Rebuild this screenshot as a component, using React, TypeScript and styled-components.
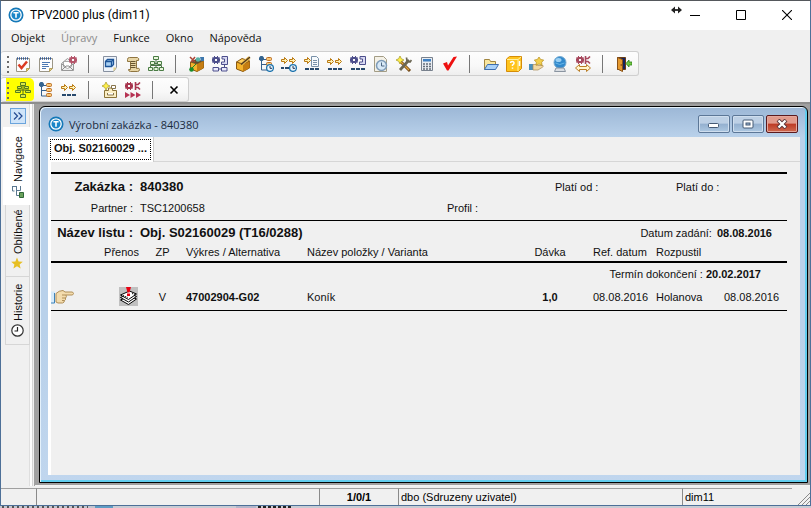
import React from "react";
import styled, { createGlobalStyle, css } from "styled-components";

const Global = createGlobalStyle`
  *, *::before, *::after { box-sizing: border-box; }
  html, body { margin: 0; padding: 0; }
  body { font-family: "Liberation Sans", Arial, sans-serif; font-size: 11px; color: #111; overflow: hidden; }
  button { font: inherit; color: inherit; margin: 0; padding: 0; border: 0; background: none; }
  h1, h2, p, dl, dd, dt { margin: 0; font-weight: inherit; font-size: inherit; }
`;

const ui = css`font-family: "Open Sans", "Segoe UI", sans-serif;`;

/* ---------- shell ---------- */
const Shell = styled.div`
  min-height: 100vh;
  display: flex;
  flex-direction: column;
  background: #c9ccd4;
`;
const AppWindow = styled.div`
  flex: 1;
  display: flex;
  flex-direction: column;
  background: #f0f0f0;
  border: 1px solid #4d7098;
  border-top-color: #55585c;
`;
const TitleBar = styled.header`
  position: relative;
  display: flex;
  align-items: center;
  height: 29px;
  padding: 0 0 2px 7px;
  gap: 6px;
  background: #fff;
`;
const Title = styled.h1`
  font-family: Roboto, "Segoe UI", sans-serif;
  font-size: 12px;
  flex: 1;
  color: #000;
`;
const Caption = styled.div`display: flex; align-items: center;`;
const CaptionButton = styled.button`
  width: 46px;
  height: 27px;
  display: grid;
  place-items: center;
`;
const ResizeMark = styled.span`
  position: absolute;
  top: 5px;
  right: 128px;
  display: grid;
`;

const MenuBar = styled.nav`
  display: flex;
  align-items: flex-start;
  height: 21px;
  padding-left: 2px;
`;
const MenuItem = styled.button<{ $muted?: boolean }>`
  ${ui}
  font-size: 11px;
  line-height: 16px;
  padding: 0 8px;
  color: ${(p) => (p.$muted ? "#8c8c8c" : "#111")};
`;

const Toolbars = styled.div`
  display: flex;
  flex-direction: column;
  align-items: flex-start;
  gap: 1px;
  border-bottom: 2px solid #8e8e8e;
`;
const Toolbar = styled.div`
  display: flex;
  align-items: center;
  height: 25px;
  padding: 0 3px 0 5px;
  border: 1px solid #cfcfcf;
  border-left: 0;
  border-radius: 3px;
  background: linear-gradient(#fdfdfd, #f8f8f8 60%, #eeeeee);
`;
const Grip = styled.span<{ $marked?: boolean }>`
  width: 5px;
  height: 23px;
  padding: 4px 2px 2px 1px;
  background: repeating-linear-gradient(#6b6b6b 0 2px, transparent 2px 5px) content-box,
    ${(p) => (p.$marked ? "#ffff00" : "transparent")};
`;
const Tool = styled.button<{ $marked?: boolean }>`
  width: 23px;
  height: 23px;
  display: grid;
  place-items: center;
  background: ${(p) => (p.$marked ? "#ffff00" : "transparent")};
  border-radius: 0 5px 4px 0;
`;
const Divider = styled.span`
  width: 1px;
  height: 18px;
  margin: 0 9px 0 8px;
  background: #777;
`;

/* ---------- workspace ---------- */
const Workspace = styled.main`flex: 1; display: flex;`;
const Sidebar = styled.aside`
  width: 34px;
  padding: 4px 1px 4px 2px;
  display: flex;
  flex-direction: column;
  background: linear-gradient(to left, #a0a0a0 1px, #f0f0f0 1px 2px, #d4d4d4 2px 3px, #fdfdfd 3px 5px, #dedede 5px 6px, #f0f0f0 6px);
`;
const Expand = styled.button`
  width: 16px;
  height: 16px;
  margin: 0 0 3px 7px;
  border: 1px solid #6aa4dc;
  background: #cfe4f9;
  display: grid;
  place-items: center;
`;
const SideTab = styled.button<{ $active?: boolean; $height: number }>`
  width: ${(p) => (p.$active ? 29 : 25)}px;
  height: ${(p) => p.$height}px;
  margin-left: ${(p) => (p.$active ? 0 : 2)}px;
  padding: 7px 0;
  writing-mode: vertical-rl;
  transform: rotate(180deg);
  display: flex;
  align-items: center;
  gap: 3px;
  font-size: 11px;
  white-space: nowrap;
  background: ${(p) => (p.$active ? "#fff" : "#f0f0f0")};
  border: ${(p) => (p.$active ? "0" : "1px solid #d6d6d6")};
  border-bottom-width: 0;
`;
const Turned = styled.span`display: grid; transform: rotate(180deg);`;

const Desk = styled.section`
  flex: 1;
  display: flex;
  min-width: 0;
  padding: 2px 2px 2px 4px;
  background: #a0a0a0;
  border-bottom: 1px solid #f4f4f4;
`;
const Child = styled.article`
  flex: 1;
  min-width: 0;
  display: flex;
  flex-direction: column;
  padding: 0 7px 7px 8px;
  border: 1px solid #000;
  border-radius: 6px 6px 0 0;
  background: linear-gradient(#9cb7d6, #b9d1ea 30px, #b9d1ea 60%, #c0d6ee);
  box-shadow: inset 1px 1px 0 #e4f1fb, inset -2px -2px 0 #62cdee;
`;
const ChildBar = styled.header`
  display: flex;
  align-items: center;
  gap: 5px;
  height: 30px;
  padding: 4px 0 0 0;
  color: #1b2b40;
`;
const ChildTitle = styled.h2`${ui} font-size: 11px; flex: 1;`;
const ChildControls = styled.div`display: flex; gap: 2px; padding-right: 2px;`;
const ChildButton = styled.button<{ $danger?: boolean }>`
  width: 32px;
  height: 18px;
  display: grid;
  place-items: center;
  border: 1px solid ${(p) => (p.$danger ? "#5b1a1e" : "#5c7797")};
  border-radius: 2px;
  box-shadow: inset 0 0 0 1px ${(p) => (p.$danger ? "#e5a79c" : "#cfdeee")};
  background: ${(p) =>
    p.$danger
      ? "linear-gradient(#e19a8c 0 45%, #bd3a25 50%, #cf6a50)"
      : "linear-gradient(#bdd0e5 0 45%, #94b0cf 50%, #adc8e2)"};
`;
const Document = styled.div`
  flex: 1;
  display: flex;
  flex-direction: column;
  min-width: 0;
  background: #f0f0f0;
`;
const DocTabs = styled.div`
  height: 25px;
  display: flex;
  border-bottom: 1px solid #d6d6d6;
`;
const DocTab = styled.button`
  height: 25px;
  padding: 2px;
  background: #fff;
  border-right: 1px solid #ccc;
  display: flex;
  & > span {
    height: 21px;
    padding: 0 3px;
    line-height: 17px;
    border: 1px dotted #000;
    font-weight: 700;
  }
`;

/* ---------- report ---------- */
const Report = styled.div`
  flex: 1;
  padding: 10px 13px 0 0;
  border-left: 3px solid #fff;
  font-size: 11px;
`;
const Band = styled.dl`
  display: grid;
  grid-template-columns: 396px 1fr 121px 111px;
  grid-template-rows: 25px 17px;
  padding-bottom: 4px;
  align-items: center;
  border-top: 2px solid #000;
  border-bottom: 1px solid #000;
`;
const Field = styled.div<{ $column?: string; $gap?: number }>`
  grid-column: ${(p) => p.$column ?? "auto"};
  display: flex;
  align-items: baseline;
  gap: ${(p) => p.$gap ?? 7}px;
  white-space: nowrap;
`;
const Label = styled.dt<{ $strong?: boolean; $wide?: boolean }>`
  ${(p) => p.$wide && "width: 82px; text-align: right;"}
  ${(p) => p.$strong && "font-size: 13px; font-weight: 700;"}
`;
const Value = styled.dd<{ $strong?: boolean; $bold?: boolean }>`
  ${(p) => p.$bold && "font-weight: 700;"}
  ${(p) => p.$strong && "font-size: 13px; font-weight: 700;"}
`;
const Sheet = styled.dl`
  display: flex;
  justify-content: space-between;
  align-items: center;
  height: 23px;
  padding-right: 15px;
`;
const Table = styled.table`
  width: 100%;
  table-layout: fixed;
  border-collapse: collapse;
  white-space: nowrap;
`;
const Head = styled.th<{ $align?: string; $indent?: number }>`
  height: 18px;
  padding: 0 0 2px ${(p) => p.$indent ?? (p.$align ? 0 : 6)}px;
  font-weight: 400;
  text-align: ${(p) => p.$align ?? "left"};
  border-bottom: 2px solid #000;
`;
const Cell = styled.td<{ $align?: string; $bold?: boolean; $indent?: number }>`
  height: 26px;
  padding: 0 0 0 ${(p) => p.$indent ?? (p.$align ? 0 : 6)}px;
  text-align: ${(p) => p.$align ?? "left"};
  font-weight: ${(p) => (p.$bold ? 700 : 400)};
  vertical-align: middle;
  svg { display: block; }
`;
const DueCell = styled.td`
  height: 22px;
  padding: 0 26px 0 0;
  text-align: right;
  b { margin-left: 3px; }
`;
const Body = styled.tbody`border-bottom: 1px solid #000;`;

/* ---------- status ---------- */
const StatusBar = styled.footer`
  display: grid;
  grid-template-columns: 36px 1fr 79px 284px 109px 18px;
  height: 17px;
  margin-top: 2px;
  align-items: stretch;
`;
const StatusCell = styled.span<{ $align?: string; $bold?: boolean }>`
  border-top: 1px solid #a0a0a0;
  border-right: 1px solid #8a8a8a;
  padding: 0 2px;
  line-height: 16px;
  text-align: ${(p) => p.$align ?? "left"};
  font-weight: ${(p) => (p.$bold ? 700 : 400)};
  color: #000;
  &:nth-last-child(2) { border-right: 0; }
`;
const Resizer = styled.span`display: grid; align-items: end; justify-items: end;`;
const Behind = styled.div`
  height: 2px;
  background:
    repeating-linear-gradient(to right, #555 0 2px, transparent 2px 5px) 2px 0 / 86px 2px no-repeat,
    repeating-linear-gradient(to right, #222 0 3px, transparent 3px 5px) 258px 0 / 33px 2px no-repeat,
    linear-gradient(to right, #c2c6d0 0 95px, #5f9cc4 95px 113px, #c9ccd4 113px 236px, #b4b6ca 236px 256px, #c9ccd4 256px);
`;

/* ---------- icons ---------- */
const Svg = ({ children, w = 16, h = 16 }: { children: React.ReactNode; w?: number; h?: number }) => (
  <svg width={w} height={h} viewBox={`0 0 ${w} ${h}`} fill="none" aria-hidden="true">{children}</svg>
);
const Logo = () => (
  <Svg>
    <circle cx="8" cy="8" r="7.5" fill="#1478b8" />
    <circle cx="8" cy="8" r="5.2" fill="#1a86c8" stroke="#fff" strokeWidth="1.3" />
    <path d="M5.4 5.800h5.200M8 5.800v5" stroke="#fff" strokeWidth="1.6" />
  </Svg>
);
/* toothed ring, 8 by 8, with a square hub */
const Gear = ({ x, y, c }: { x: number; y: number; c: string }) => (
  <g transform={`translate(${x} ${y})`}>
    <path fillRule="evenodd" fill={c} d="M2 0h1v1h2V0h1v1.500l1-.5 1 1-.5 1H8v2h-.5l.5 1-1 1-1-.5V8H5V7H3v1H2V6.500L1 7 0 6l.5-1H0V3h.5L0 2l1-1 1 .5zM3 3v2h2V3z" />
  </g>
);
const Arrows = ({ y = 1, n = 2 }: { y?: number; n?: number }) => (
  <g transform={`translate(0 ${y})`} fill="#fff3b8" stroke="#b9780f">
    <path d="M.5 3.500h3v-2l3 3-3 3v-2h-3z" />
    {n > 1 && <path d="M8.500 3.500h3v-2l3 3-3 3v-2h-3z" />}
  </g>
);
const Dashes = ({ y = 12 }: { y?: number }) => <path d={`M1 ${y + 1}h4M6 ${y + 1}h4M11 ${y + 1}h4`} stroke="#27496d" strokeWidth="2" />;
const Clock = () => (
  <g><circle cx="12" cy="12" r="3.400" fill="#e8f5fd" stroke="#1f74ad" strokeWidth="1.300" /><path d="M12 10v2.300h2" stroke="#235" /></g>
);
const TreeGreen = () => (
  <Svg>
    <path d="M8 4v8M3.500 7.500h9M2.500 11V9.500h11V11" stroke="#4b7046" />
    <g fill="#e9f5dc" stroke="#4a7c45">
      <path d="M5.500.5h5v3h-5zM2.500 5.500h4v3h-4zM9.500 5.500h4v3h-4zM.5 11.500h4v3h-4zM6 11.500h4v3H6zM11.500 11.500h4v3h-4z" />
    </g>
  </Svg>
);
const TreeMarked = () => (
  <Svg>
    <path d="M8 3v10M2 8h12" stroke="#46682a" />
    <g fill="#d8e84a" stroke="#557c20">
      <path d="M5.500.5h5v3h-5zM2.500 4.500h4v2h-4zM9.500 4.500h4v2h-4zM.5 8.500h5v2h-5zM10.500 8.500h5v2h-5zM5.500 12.500h5v3h-5z" />
    </g>
  </Svg>
);
const TreeOrange = ({ clock }: { clock?: boolean }) => (
  <Svg>
    <path d="M3.500 3v11h6M3.500 8.500h6M3.500 3.500h5" stroke="#345f8c" />
    <path d="M1 1.500L2.500 0h2L6 1.500v2L4.500 5h-2L1 3.500z" fill="#34648f" />
    <g fill="#f9c777" stroke="#b86b22"><rect x="8.500" y="1.500" width="5" height="3" rx="1" /><rect x="8.500" y="6.500" width="5" height="3" rx="1" />{!clock && <rect x="8.500" y="11.500" width="5" height="3" rx="1" />}</g>
    {clock && <Clock />}
  </Svg>
);
const Notepad = ({ check }: { check?: boolean }) => (
  <Svg>
    <path d="M1.500 2.500h13v10l-3 3h-10z" fill="#fdfdfd" stroke="#9b9687" />
    <path d="M2 2.500h12" stroke="#345a96" strokeWidth="2.500" strokeDasharray="1 1" />
    <path d="M11.500 15.500v-3h3z" fill="#e5cf83" stroke="#b5a15c" />
    {check ? <path d="M3.500 8.500l3 3.500 5.500-6.500" stroke="#db3c23" strokeWidth="2.500" /> : <path d="M4 6.500h8M4 8.500h6M4 10.500h7M4 12.500h4" stroke="#4b78b2" />}
  </Svg>
);
const Envelope = () => (
  <Svg>
    <path d="M.5 7.500l6-5 6 5v7H.5z" fill="#eee" stroke="#999" />
    <path d="M2.500 5.500h8v5l-4 2-4-2z" fill="#fff" stroke="#aaa" />
    <path d="M1 14l4-4h3l4 4M1 8l4 3M12 8l-4 3" stroke="#8c8c8c" />
    <Gear x={8} y={0} c="#b5566b" />
  </Svg>
);
const Cube = () => (
  <Svg>
    <path d="M1.500.5h13v11l-3 4h-10z" fill="#edf3fa" stroke="#8790a0" />
    <path d="M11.500 15.500v-4h3z" fill="#e5cf83" />
    <path d="M3.500 5.500l2-2h6v5l-2 2h-6z" fill="#a9d0f3" stroke="#1e5598" strokeWidth="1.300" /><path d="M3.500 5.500h6v5M9.500 5.500l2-2" stroke="#1e5598" strokeWidth="1.300" />
  </Svg>
);
const Scroll = () => (
  <Svg>
    <path d="M2.500 3.500q0-2 2-2h8q2 1 1 3h-2v8q3-1 3 1t-2 2h-7q-2 0-2-2h2v-8h-3z" fill="#e7d5a5" stroke="#8f7540" />
    <path d="M5.500 5.500h5M5.500 7.500h5M5.500 9.500h5M5.500 11.500h5" stroke="#67552f" />
  </Svg>
);
const Box = ({ kind }: { kind: "parts" | "pen" }) => (
  <Svg>
    <path d="M1.500 6L8 8l6.500-3v7L8 15.500 1.500 13z" fill="#f3b32c" stroke="#8b5a12" />
    <path d="M8 8v7.500l6.500-3.500V5z" fill="#c57d12" />
    {kind === "parts" ? (
      <g><path d="M2 6l5-3 7 2-6 3z" fill="#5e4c2a" /><path d="M1 1l5 5M6 1L2 6" stroke="#a94435" strokeWidth="1.500" /><circle cx="9" cy="3.500" r="2.300" fill="#57b3a7" /><path d="M11 1h4v4h-3z" fill="#3e78ad" /><circle cx="2.500" cy="13.500" r="2.300" fill="#188b2b" /><path d="M2 13L7 8" stroke="#188b2b" /></g>
    ) : (
      <g><path d="M1.500 6L7 2.500 14.500 5 8 8z" fill="#ffd05e" stroke="#8b5a12" /><path d="M7 8l7.500-6.500" stroke="#e5b64a" strokeWidth="3" /><path d="M6 8.500L15 1" stroke="#4a3520" strokeWidth="1.200" /></g>
    )}
  </Svg>
);
const GearBox = ({ dashes }: { dashes?: boolean }) => (
  <Svg>
    <Gear x={0} y={0} c="#4d4f8c" />
    <path d="M10 .5h5.500v8H9.500v-2.500h3v-3H10z" fill="#d9daf2" stroke="#4d4f8c" />
    {dashes ? <Dashes y={12} /> : <path d="M1 11.500h5.500v3.500H1zM9.500 11.500H15v3.500H9.500zM6.500 13h3M12.500 8.500v3" fill="#e9e9fb" stroke="#4d4f8c" />}
  </Svg>
);
const ArrowRow = ({ clock, doc }: { clock?: boolean; doc?: boolean }) => (
  <Svg>
    <Arrows y={clock || doc ? 0 : 1} n={doc ? 1 : 2} />
    {doc && <g><path d="M7.500.5h5l2 2v8h-7z" fill="#f6fafd" stroke="#7890a8" /><path d="M9 4.500h4M9 6.500h4M9 8.500h4" stroke="#7890a8" /></g>}
    {clock ? <g><path d="M0 12h3M4 12h4" stroke="#27496d" strokeWidth="2" /><Clock /></g> : <Dashes y={12} />}
  </Svg>
);
const ClockPage = () => (
  <Svg>
    <path d="M1.500.5h9l3 3v12h-12z" fill="#f4f1e7" stroke="#a39c85" />
    <circle cx="8.500" cy="9.500" r="5" fill="#d8e9f7" stroke="#7e9bb8" strokeWidth="1.500" /><path d="M8.500 6.500v3.500h3" stroke="#4d6784" />
  </Svg>
);
const Tools = () => (
  <Svg>
    <path d="M4 5l10 10" stroke="#704819" strokeWidth="3" /><path d="M5 6l8 8" stroke="#e1a43c" strokeWidth="1.300" />
    <path d="M13 4L4 14" stroke="#6b6754" strokeWidth="2.800" /><path d="M10.500 1.500l.5 3.500 3 1 1.500-2" stroke="#6b6754" strokeWidth="1.700" />
    <path d="M4 0l1.300 2.700L8 4 5.300 5.300 4 8 2.700 5.300 0 4l2.700-1.300z" fill="#fff04b" stroke="#a49720" strokeWidth=".7" />
  </Svg>
);
const Calculator = () => (
  <Svg>
    <path d="M2.500 1.500h11v13h-11z" fill="#e9edf2" stroke="#78818d" /><path d="M4 3h8v2.500H4z" fill="#3f80c2" />
    <path d="M4 8h8M4 10.500h8M4 13h8" stroke="#646d79" strokeWidth="1.500" strokeDasharray="2 1" />
  </Svg>
);
const Check = () => <Svg><path d="M1 7.500l4-1.500 1 3.500L11.500 1 15 .5 6.500 14.500H5z" fill="#ee1111" /></Svg>;
const Folder = () => (
  <Svg>
    <path d="M1.500 13.500v-10h5l1 2h5v3" fill="#f9e69f" stroke="#a08541" /><path d="M4.500 8.500h11l-3 5h-11z" fill="#a9d1f9" stroke="#3e6eae" />
  </Svg>
);
const Question = () => (
  <Svg>
    <path d="M.5 3l3-2.500h12v12l-3 3H.5z" fill="#ffc41e" stroke="#d58d08" /><path d="M1 3.500h11V15M12 3.500l3-2.500" stroke="#fff0a0" />
    <path d="M4.500 7q0-1.500 1.800-1.500T8 7.200Q8 8 6.500 9v1M6.500 11.500v1.300M13.500 5v5" stroke="#fff" strokeWidth="1.500" />
  </Svg>
);
const HandStar = () => (
  <Svg>
    <path d="M0 8h4v6H0z" fill="#4a90bd" /><path d="M4 8.500h3l2 1h5q1 1-1 2l-4 2.500H4z" fill="#f3d9a2" stroke="#a88b57" strokeWidth=".7" />
    <path d="M10 1l1.700 2.500 3 .5-2 2.300.3 3-3-1.300-3 1.300.3-3-2-2.300 3-.5z" fill="#f2cf4c" stroke="#b48c1c" strokeWidth=".7" />
  </Svg>
);
const Globe = () => (
  <Svg>
    <circle cx="8" cy="6.500" r="6" fill="#3289cc" stroke="#76abd1" /><ellipse cx="6.500" cy="4" rx="3" ry="2" fill="#9bd0f3" /><path d="M3.500 7q4 3 9 0" stroke="#68b7e8" />
    <path d="M4 12h8l1.500 3.500h-11z" fill="#d9dde2" stroke="#8a94a0" />
  </Svg>
);
const GearSwap = () => (
  <Svg>
    <Gear x={1} y={0} c="#a7485d" /><path d="M10.500 0v8M10.500 2.500h2.500l2-2M10.500 5.500h2.500l2 2" stroke="#a7485d" strokeWidth="1.600" />
    <path d="M.5 12l4-3.500v2h7v-2l4 3.500-4 3.500v-2h-7v2z" fill="#fff5cd" stroke="#b97d26" />
  </Svg>
);
const Door = () => (
  <Svg>
    <path d="M1.500 1.500h8v12h-8z" fill="#16245f" stroke="#693d16" /><path d="M1.500 1.500l5 2v12l-5-2.500z" fill="#e69a30" stroke="#8a5217" /><circle cx="5.200" cy="9" r=".7" fill="#5b3008" />
    <path d="M10 7.500L13 4v2h3v3h-3v2z" fill="#74ca40" stroke="#2b7d1c" strokeWidth=".8" />
  </Svg>
);
const NewBox = () => (
  <Svg>
    <path d="M2.500 8.500h4V6h4v2.500h4v7h-12z" fill="#fbeec4" stroke="#8a7338" /><path d="M9.500 3.500h4v3h-4zM5.500 11v2h6v-2" fill="#fff" stroke="#87744a" />
    <path d="M4 0l1.300 2.700L8 4 5.300 5.300 4 8 2.700 5.300 0 4l2.700-1.300z" fill="#fff04b" stroke="#a49720" strokeWidth=".7" />
  </Svg>
);
const GearPlay = () => (
  <Svg>
    <Gear x={0} y={0} c="#a8364f" /><path d="M10.500 0v8M10.500 2.500h2.500l2-2M10.500 5.500h2.500l2 2" stroke="#a8364f" strokeWidth="1.600" />
    <path d="M0 10l5 3-5 3zM5.500 10l5 3-5 3zM11 10l5 3-5 3z" fill="#b63353" />
  </Svg>
);
const CloseX = () => <Svg><path d="M4.500 4.500l7 7M11.500 4.500l-7 7" stroke="#000" strokeWidth="1.600" /></Svg>;
const NavIcon = () => (
  <Svg w={13} h={13}>
    <path d="M1.500 1v5h2M1.500 1.500h4M5.500 1v9.500h3M5.500 5.500h4M9.500 1v4.500" stroke="#5b7890" />
    <path d="M8.500 7.500h4v5h-4z" fill="#6aa15c" stroke="#2f6738" />
  </Svg>
);
const Star = () => <Svg w={12} h={12}><path d="M6 .5l1.600 3.900 4.200.3-3.200 2.700 1 4.100L6 9.300l-3.600 2.200 1-4.100L.2 4.700l4.200-.3z" fill="#e7bf23" /></Svg>;
const HistoryClock = () => <Svg w={13} h={13}><circle cx="6.500" cy="6.500" r="5.700" fill="#fff" stroke="#333" strokeWidth="1.200" /><path d="M6.500 3v4h-3" stroke="#222" strokeWidth="1.200" /></Svg>;
const Hand = () => (
  <Svg w={23} h={16}>
    <path d="M0 2.500h4v12H0z" fill="#d5eafa" /><path d="M3.500 4v10H0" stroke="#3e83b9" />
    <path d="M5 4.500q3-3 7-3l2 1.500h7.500q2 1.500 0 3H15q1 2-.5 3 .5 2-1 2.500 0 2-2 2.500H7L5 13z" fill="#f3dcae" stroke="#b08f58" />
    <path d="M15 6h-4M14.500 9H11M13.500 11.500H11" stroke="#b08f58" />
  </Svg>
);
const Papers = () => (
  <Svg w={19} h={19}>
    <path d="M0 0h19v19H0z" fill="#c0c0c0" />
    <path d="M1.500 13l9-4 7 3-8 5.500z" fill="#fff" stroke="#000" /><path d="M1.500 10.500l9-4 7 3-8 5.500z" fill="#fff" stroke="#000" /><path d="M1.500 8l9-4 7 3-8 5.500z" fill="#fff" stroke="#000" />
    <path d="M4 8.500l5 2M13 6.500l3 1" stroke="#000" strokeDasharray="1 1" />
    <path d="M7 0h5l-1.500 5.500h-2zM8 6.500h3v2.500H8z" fill="#e80012" />
  </Svg>
);

type Item = { name: string; icon: React.ReactNode; marked?: boolean } | null;
const mainTools: Item[] = [
  { name: "Úkoly", icon: <Notepad check /> }, { name: "Poznámky", icon: <Notepad /> }, { name: "Zprávy", icon: <Envelope /> }, null,
  { name: "Model", icon: <Cube /> }, { name: "Dokument", icon: <Scroll /> }, { name: "Struktura", icon: <TreeGreen /> }, null,
  { name: "Položky", icon: <Box kind="parts" /> }, { name: "Operace", icon: <GearBox /> }, { name: "Úprava položky", icon: <Box kind="pen" /> },
  { name: "Časový kusovník", icon: <TreeOrange clock /> }, { name: "Časový postup", icon: <ArrowRow clock /> }, { name: "Popis postupu", icon: <ArrowRow doc /> },
  { name: "Postup", icon: <ArrowRow /> }, { name: "Stroje", icon: <GearBox dashes /> }, { name: "Plán", icon: <ClockPage /> },
  { name: "Nářadí", icon: <Tools /> }, { name: "Kalkulace", icon: <Calculator /> }, { name: "Kontrola", icon: <Check /> }, null,
  { name: "Otevřít", icon: <Folder /> }, { name: "Dotaz", icon: <Question /> }, { name: "Oblíbené", icon: <HandStar /> },
  { name: "Síť", icon: <Globe /> }, { name: "Převod", icon: <GearSwap /> }, null, { name: "Konec", icon: <Door /> },
];
const orderTools: Item[] = [
  { name: "Struktura zakázky", icon: <TreeMarked />, marked: true }, { name: "Kusovník", icon: <TreeOrange /> }, { name: "Postup", icon: <ArrowRow /> }, null,
  { name: "Nová položka", icon: <NewBox /> }, { name: "Spustit", icon: <GearPlay /> }, null, { name: "Zavřít", icon: <CloseX /> },
];
const ToolStrip = ({ items, label }: { items: Item[]; label: string }) => (
  <Toolbar role="toolbar" aria-label={label}>
    <Grip $marked={items[0]?.marked} />
    {items.map((it, i) => it ? <Tool key={i} aria-label={it.name} $marked={it.marked}>{it.icon}</Tool> : <Divider key={i} />)}
  </Toolbar>
);

export default function App() {
  return (
    <Shell>
      <Global />
      <AppWindow>
        <TitleBar>
          <Logo />
          <Title>TPV2000 plus (dim11)</Title>
          <ResizeMark><Svg w={11} h={8}><path d="M1 4h9" stroke="#222" strokeWidth="1.800" /><path d="M0 4l4-3.500v7zM11 4L7 .5v7z" fill="#222" /></Svg></ResizeMark>
          <Caption>
            <CaptionButton aria-label="Minimalizovat"><Svg w={10} h={10}><path d="M0 5.500h10" stroke="#000" /></Svg></CaptionButton>
            <CaptionButton aria-label="Maximalizovat"><Svg w={10} h={10}><path d="M.5.5h9v9h-9z" stroke="#000" /></Svg></CaptionButton>
            <CaptionButton aria-label="Zavřít"><Svg w={10} h={10}><path d="M0 0l10 10M10 0L0 10" stroke="#000" strokeWidth="1.100" /></Svg></CaptionButton>
          </Caption>
        </TitleBar>
        <MenuBar>
          <MenuItem>Objekt</MenuItem>
          <MenuItem $muted>Úpravy</MenuItem>
          <MenuItem>Funkce</MenuItem>
          <MenuItem>Okno</MenuItem>
          <MenuItem>Nápověda</MenuItem>
        </MenuBar>
        <Toolbars>
          <ToolStrip items={mainTools} label="Hlavní panel" />
          <ToolStrip items={orderTools} label="Panel zakázky" />
        </Toolbars>
        <Workspace>
          <Sidebar>
            <Expand aria-label="Rozbalit"><Svg w={10} h={8}><path d="M1 .5L4.500 4 1 7.500M5.500.5L9 4 5.500 7.500" stroke="#244a91" strokeWidth="1.200" /></Svg></Expand>
            <SideTab $active $height={78}><Turned><NavIcon /></Turned>Navigace</SideTab>
            <SideTab $height={72}><Turned><Star /></Turned>Oblíbené</SideTab>
            <SideTab $height={68}><Turned><HistoryClock /></Turned>Historie</SideTab>
          </Sidebar>
          <Desk>
            <Child>
              <ChildBar>
                <Logo />
                <ChildTitle>Výrobní zakázka - 840380</ChildTitle>
                <ChildControls>
                  <ChildButton aria-label="Minimalizovat okno"><Svg w={12} h={10}><rect x=".5" y="4.500" width="10" height="4" rx="1" fill="#fff" stroke="#455a74" /></Svg></ChildButton>
                  <ChildButton aria-label="Obnovit okno"><Svg w={12} h={10}><rect x="1" y="1" width="10" height="8" rx="1" fill="#fff" stroke="#455a74" /><rect x="4" y="4" width="4" height="2" fill="#9bb5d3" stroke="#455a74" /></Svg></ChildButton>
                  <ChildButton $danger aria-label="Zavřít okno"><Svg w={12} h={10}><path d="M2 1l8 8M10 1L2 9" stroke="#583339" strokeWidth="4" /><path d="M2.500 1.500l7 7M9.500 1.500l-7 7" stroke="#fff" strokeWidth="2.300" /></Svg></ChildButton>
                </ChildControls>
              </ChildBar>
              <Document>
                <DocTabs><DocTab><span>Obj. S02160029 ...</span></DocTab></DocTabs>
                <Report>
                  <Band>
                    <Field $column="1 / 3"><Label $wide $strong>Zakázka :</Label><Value $strong>840380</Value></Field>
                    <Field><Label>Platí od :</Label><Value /></Field>
                    <Field><Label>Platí do :</Label><Value /></Field>
                    <Field><Label $wide>Partner :</Label><Value>TSC1200658</Value></Field>
                    <Field $column="2 / 5"><Label>Profil :</Label><Value /></Field>
                  </Band>
                  <Sheet>
                    <Field><Label $wide $strong>Název listu :</Label><Value $strong>Obj. S02160029 (T16/0288)</Value></Field>
                    <Field $gap={5}><Label>Datum zadání:</Label><Value $bold>08.08.2016</Value></Field>
                  </Sheet>
                  <Table>
                    <colgroup>
                      <col width="47" /><col width="47" /><col width="35" /><col width="121" /><col /><col width="58" /><col width="71" /><col width="68" /><col width="69" />
                    </colgroup>
                    <thead>
                      <tr>
                        <Head aria-label="Ukazatel" /><Head $align="center">Přenos</Head><Head $align="center">ZP</Head>
                        <Head>Výkres / Alternativa</Head><Head>Název položky / Varianta</Head><Head $align="center">Dávka</Head>
                        <Head $indent={14}>Ref. datum</Head><Head>Rozpustil</Head><Head aria-label="Datum rozpuštění" />
                      </tr>
                    </thead>
                    <Body>
                      <tr><DueCell colSpan={9}>Termín dokončení :<b>20.02.2017</b></DueCell></tr>
                      <tr>
                        <Cell $indent={0}><Hand /></Cell><Cell $indent={21}><Papers /></Cell><Cell $align="center">V</Cell>
                        <Cell $bold>47002904-G02</Cell><Cell>Koník</Cell><Cell $align="center" $bold>1,0</Cell>
                        <Cell $indent={14}>08.08.2016</Cell><Cell>Holanova</Cell><Cell>08.08.2016</Cell>
                      </tr>
                    </Body>
                  </Table>
                </Report>
              </Document>
            </Child>
          </Desk>
        </Workspace>
        <StatusBar>
          <StatusCell /><StatusCell />
          <StatusCell $align="center" $bold>1/0/1</StatusCell>
          <StatusCell>dbo (Sdruzeny uzivatel)</StatusCell>
          <StatusCell>dim11</StatusCell>
          <Resizer><Svg w={12} h={12}><path d="M0 12L12 0M4 12l8-8M8 12l4-4" stroke="#8a8a8a" /></Svg></Resizer>
        </StatusBar>
      </AppWindow>
      <Behind />
    </Shell>
  );
}
